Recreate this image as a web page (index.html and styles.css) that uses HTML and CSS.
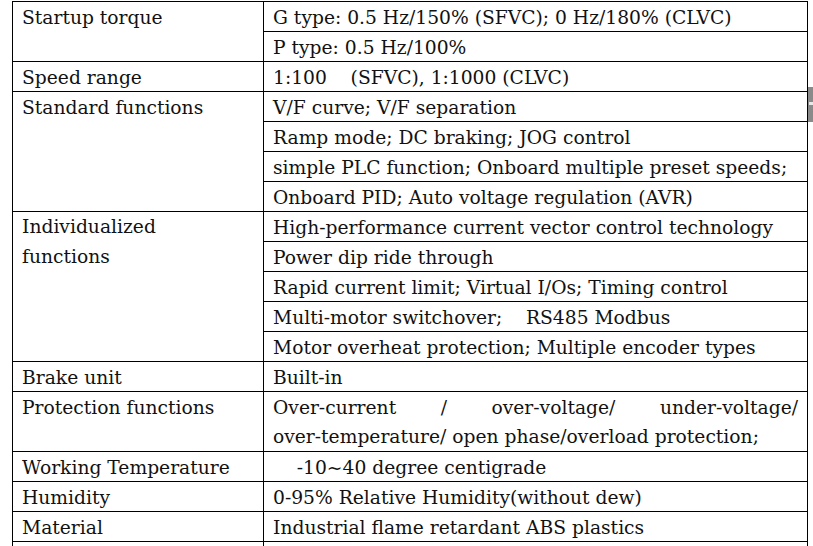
FILE: index.html
```html
<!DOCTYPE html>
<html>
<head>
<meta charset="utf-8">
<link rel="stylesheet" href="styles.css">
</head>
<body>
<table class="spec">
  <colgroup><col class="c1"><col class="c2"></colgroup>
  <tr><td rowspan="2">Startup torque</td><td>G type: 0.5 Hz/150% (SFVC); 0 Hz/180% (CLVC)</td></tr>
  <tr><td>P type: 0.5 Hz/100%</td></tr>
  <tr><td>Speed range</td><td class="pre">1:100    (SFVC), 1:1000 (CLVC)</td></tr>
  <tr><td rowspan="4">Standard functions</td><td>V/F curve; V/F separation</td></tr>
  <tr><td>Ramp mode; DC braking; JOG control</td></tr>
  <tr><td>simple PLC function; Onboard multiple preset speeds;</td></tr>
  <tr><td>Onboard PID; Auto voltage regulation (AVR)</td></tr>
  <tr><td rowspan="5" class="tall">Individualized<br>functions</td><td>High-performance current vector control technology</td></tr>
  <tr><td>Power dip ride through</td></tr>
  <tr><td>Rapid current limit; Virtual I/Os; Timing control</td></tr>
  <tr><td class="pre">Multi-motor switchover;    RS485 Modbus</td></tr>
  <tr><td>Motor overheat protection; Multiple encoder types</td></tr>
  <tr><td>Brake unit</td><td>Built-in</td></tr>
  <tr><td>Protection functions</td><td class="two"><span class="line just">Over-current / over-voltage/ under-voltage/</span><span class="line">over-temperature/ open phase/overload protection;</span></td></tr>
  <tr><td>Working Temperature</td><td class="pre">    -10~40 degree centigrade</td></tr>
  <tr><td>Humidity</td><td>0-95% Relative Humidity(without dew)</td></tr>
  <tr><td>Material</td><td>Industrial flame retardant ABS plastics</td></tr>
  <tr class="tail"><td></td><td></td></tr>
</table>
<div class="side-tab"><span class="tick"></span></div>
</body>
</html>
```
FILE: styles.css
```css
html, body {
  margin: 0;
  padding: 0;
  background: #fff;
  overflow: hidden;
  height: 546px;
}
body {
  padding: 1px 0 0 12px;
  font-family: "DejaVu Serif", "Liberation Serif", serif;
  color: #111;
}
.spec {
  border-collapse: collapse;
  width: 796px;
  table-layout: fixed;
  font-size: 18.7px;
}
.spec .c1 { width: 251px; }
.spec td {
  border: 1px solid #000;
  padding: 2px 9px 0 9px;
  line-height: 27px;
  vertical-align: top;
  white-space: nowrap;
  overflow: hidden;
}
.spec td.tall { line-height: 30px; padding-top: 0; }
.spec td.two { line-height: 28.5px; }
.spec td.pre { white-space: pre; }
.spec .line {
  display: block;
  white-space: nowrap;
}
.spec .line.just {
  white-space: normal;
  text-align: justify;
  text-align-last: justify;
}
.spec .tail td {
  height: 10px;
  padding: 0;
}
.side-tab {
  position: absolute;
  left: 808px;
  top: 87px;
  width: 6px;
  height: 35px;
  background: #8a8a8a;
}
.side-tab .tick {
  position: absolute;
  left: 1px;
  top: 15px;
  width: 5px;
  height: 3px;
  background: #e8e8e8;
}
```
